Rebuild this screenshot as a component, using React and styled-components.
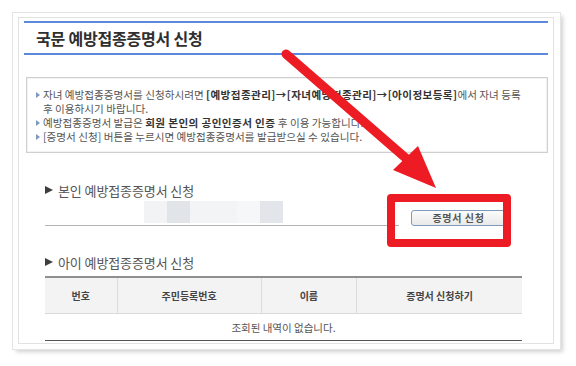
import React from "react";
import styled, { createGlobalStyle } from "styled-components";

const FONT = `"Noto Sans CJK KR", "Noto Sans", sans-serif`;

const GlobalStyle = createGlobalStyle`
  html, body {
    margin: 0;
    padding: 0;
    background: #fff;
    font-family: ${FONT};
  }
`;

//#region Styled Components

const Page = styled.div`
  position: relative;
  width: 576px;
  height: 366px;
  overflow: hidden;
  padding: 12px 0 0 12px;
  box-sizing: border-box;
`;

const Frame = styled.div`
  position: relative;
  width: 549px;
  height: 338px;
  box-sizing: border-box;
  padding: 4px 6px 5px 5px;
  background: #fff;
  border: 1px solid #e4e4e4;
  box-shadow: 3px 3px 4px -1px rgba(0, 0, 0, 0.18);
`;

const Inner = styled.div`
  height: 100%;
  box-sizing: border-box;
  border: 1px solid #e2e2e2;
  padding: 3px 5px 0 5px;
`;

const TitleBar = styled.div`
  height: 30px;
  display: flex;
  align-items: center;
  padding-left: 12px;
  border-top: 2px solid #5d89dd;
  border-bottom: 2px solid #5d89dd;
  font-size: 16px;
  font-weight: 700;
  color: #2f2f2f;
  letter-spacing: -0.2px;
`;

const InfoBox = styled.ul`
  list-style: none;
  margin: 22px 0 0 2px;
  padding: 10px 8px 8px 9px;
  border: 1px solid #cfcfcf;
  box-shadow: inset 0 0 0 1px #f2f2f2;
  font-size: 10.6px;
  line-height: 14px;
  color: #555;
  letter-spacing: 0;
`;

const InfoItem = styled.li`
  position: relative;
  padding-left: 7px;

  &::before {
    content: "";
    position: absolute;
    left: 0;
    top: 4px;
    border-left: 4px solid #7f98bb;
    border-top: 3px solid transparent;
    border-bottom: 3px solid transparent;
  }

  b {
    color: #333;
    letter-spacing: 0.4px;
  }
`;

const Section = styled.section`
  margin: ${props => props.$top}px 20px 0 21px;
`;

const Heading = styled.h3`
  margin: 0;
  display: flex;
  align-items: center;
  gap: 5px;
  height: 16px;
  font-size: 13px;
  font-weight: 400;
  color: #555;
  letter-spacing: -0.1px;

  &::before {
    content: "";
    border-left: 8px solid #3d3d3d;
    border-top: 4.5px solid transparent;
    border-bottom: 4.5px solid transparent;
  }
`;

const CertRow = styled.div`
  display: flex;
  align-items: flex-end;
  margin-top: 3px;
`;

const BlurLine = styled.div`
  flex: 1;
  display: flex;
  padding: 0 0 2px 99px;
  border-bottom: 1px solid #b4b4b4;
  margin-right: 12px;
`;

const Blur = styled.span`
  width: ${props => props.$w}px;
  height: 22px;
  background: ${props => props.$c};
`;

const Button = styled.button`
  width: 95px;
  height: 16px;
  margin: 0 22px 0 0;
  padding: 0;
  border: 1px solid #7e9aba;
  border-radius: 3px;
  background: linear-gradient(#fbfbfb, #e9e9e9);
  font-family: ${FONT};
  font-size: 10px;
  font-weight: 700;
  color: #555;
  letter-spacing: 0.6px;
  line-height: 14px;
`;

const Table = styled.table`
  width: 477px;
  margin-top: 6px;
  border-collapse: collapse;
  font-size: 10px;
  color: #555;
`;

const Th = styled.th`
  width: ${props => props.$w}px;
  height: 35px;
  padding: 0;
  background: #f3f3f3;
  border-top: 2px solid #8f8f8f;
  border-bottom: 1px solid #d9d9d9;
  border-left: 1px solid #dcdcdc;
  font-weight: 700;
  color: #444;

  &:first-child {
    border-left: none;
  }
`;

const Td = styled.td`
  height: 26px;
  padding: 0;
  text-align: center;
  border-bottom: 1px solid #555;
  font-size: 10.5px;
`;

const Highlight = styled.div`
  position: absolute;
  left: 387px;
  top: 194px;
  width: 124px;
  height: 53px;
  box-sizing: border-box;
  border: 8px solid #ed1c24;
  border-radius: 4px;
`;

const ArrowLayer = styled.svg`
  position: absolute;
  left: 0;
  top: 0;
  pointer-events: none;
`;

//#endregion

const BLURS = [
  { w: 23, c: "#f2f3f5" },
  { w: 23, c: "#e1e5e9" },
  { w: 47, c: "#f3f4f6" },
  { w: 23, c: "#f6f7f8" },
  { w: 23, c: "#e2e6ea" },
];

const COLUMNS = [
  { label: "번호", w: 72 },
  { label: "주민등록번호", w: 144 },
  { label: "이름", w: 95 },
  { label: "증명서 신청하기", w: 166 },
];

export default function App() {
  return (
    <Page>
      <GlobalStyle />
      <Frame>
        <Inner>
          <TitleBar>국문 예방접종증명서 신청</TitleBar>

          <InfoBox>
            <InfoItem>
              자녀 예방접종증명서를 신청하시려면 <b>[예방접종관리]→[자녀예방접종관리]→[아이정보등록]</b>에서 자녀 등록<br />
              후 이용하시기 바랍니다.
            </InfoItem>
            <InfoItem>
              예방접종증명서 발급은 <b>회원 본인의 공인인증서 인증</b> 후 이용 가능합니다.
            </InfoItem>
            <InfoItem>
              [증명서 신청] 버튼을 누르시면 예방접종증명서를 발급받으실 수 있습니다.
            </InfoItem>
          </InfoBox>

          <Section $top={29}>
            <Heading>본인 예방접종증명서 신청</Heading>
            <CertRow>
              <BlurLine>
                {BLURS.map((b, i) => <Blur key={i} $w={b.w} $c={b.c} />)}
              </BlurLine>
              <Button type="button">증명서 신청</Button>
            </CertRow>
          </Section>

          <Section $top={28}>
            <Heading>아이 예방접종증명서 신청</Heading>
            <Table>
              <thead>
                <tr>
                  {COLUMNS.map(col => <Th key={col.label} $w={col.w}>{col.label}</Th>)}
                </tr>
              </thead>
              <tbody>
                <tr>
                  <Td colSpan={4}>조회된 내역이 없습니다.</Td>
                </tr>
              </tbody>
            </Table>
          </Section>
        </Inner>
      </Frame>

      <Highlight />
      <ArrowLayer width="576" height="366" viewBox="0 0 576 366">
        <line x1="286" y1="54" x2="408" y2="160" stroke="#ed1c24" strokeWidth="9" strokeLinecap="round" />
        <polygon points="393,170 418,146 436,188" fill="#ed1c24" />
      </ArrowLayer>
    </Page>
  );
}
